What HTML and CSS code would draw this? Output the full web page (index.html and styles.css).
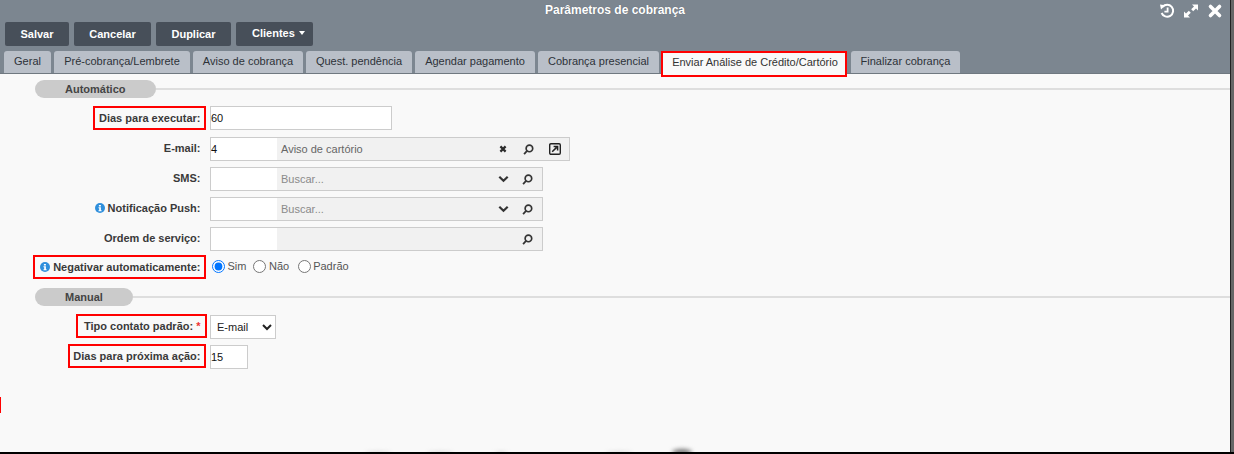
FILE: index.html
```html
<!DOCTYPE html>
<html lang="en">
<head>
    <meta charset="UTF-8">
    <title>Parâmetros de cobrança</title>
    <link rel="stylesheet" href="styles.css">
</head>
<body>
    <svg class="icon-defs" width="0" height="0">
        <symbol id="i-search" viewBox="0 0 12 12">
            <circle cx="7" cy="4.8" r="3.6" fill="none" stroke="currentColor" stroke-width="1.8"/>
            <path d="M4.4 7.6 1.2 11" fill="none" stroke="currentColor" stroke-width="2"/>
        </symbol>
        <symbol id="i-chevron" viewBox="0 0 12 8">
            <path d="M1.4 1.6 6 6 10.6 1.6" fill="none" stroke="currentColor" stroke-width="2.4"/>
        </symbol>
        <symbol id="i-info" viewBox="0 0 10 10">
            <circle cx="5" cy="5" r="5" fill="#2f8fdc"/>
            <path d="M3.9 2h2v1.5h-2zM3.5 4.2h2.4v3h.7v1H3.5v-1h.7v-2h-.7z" fill="#fff"/>
        </symbol>
    </svg>

    <div class="window">
        <div class="header">
            <div class="title-bar">
                <span class="title">Parâmetros de cobrança</span>
                <div class="window-icons">
                    <svg class="win-icon" viewBox="0 0 16 16">
                        <path d="M3.6 3.8A6 6 0 1 1 2.6 10" fill="none" stroke="#fff" stroke-width="2"/>
                        <path d="M1 1.6 6.4 2.2 2 6.6z" fill="#fff"/>
                        <path d="M8.6 4.4v4.2H5.4" fill="none" stroke="#fff" stroke-width="1.8"/>
                    </svg>
                    <svg class="win-icon" viewBox="0 0 16 16">
                        <path d="M9 1.4h6v6l-2-2-2.8 2.8-2-2L11 3.4zM7 14.6H1v-6l2 2 2.8-2.8 2 2L5 12.6z" fill="#fff"/>
                    </svg>
                    <svg class="win-icon" viewBox="0 0 16 16">
                        <path d="M3.5 3.5 12.5 12.5M12.5 3.5 3.5 12.5" stroke="#fff" stroke-width="3.6" stroke-linecap="round"/>
                    </svg>
                </div>
            </div>

            <div class="toolbar">
                <button class="btn btn-save">Salvar</button>
                <button class="btn btn-cancel">Cancelar</button>
                <button class="btn btn-copy">Duplicar</button>
                <button class="btn btn-menu">Clientes <span class="caret"></span></button>
            </div>

            <div class="tabs">
                <div class="tab tab-geral">Geral</div>
                <div class="tab tab-pre">Pré-cobrança/Lembrete</div>
                <div class="tab tab-aviso">Aviso de cobrança</div>
                <div class="tab tab-quest">Quest. pendência</div>
                <div class="tab tab-agendar">Agendar pagamento</div>
                <div class="tab tab-presencial">Cobrança presencial</div>
                <div class="tab tab-active">Enviar Análise de Crédito/Cartório</div>
                <div class="tab tab-final">Finalizar cobrança</div>
            </div>
        </div>

        <div class="content">
            <div class="section-head">
                <div class="pill pill-auto">Automático</div>
                <div class="section-line"></div>
            </div>

            <div class="row row-first">
                <div class="label-col"><label class="field-label marked mark-dias">Dias para executar:</label></div>
                <input class="text-input input-wide" value="60">
            </div>

            <div class="row row-email">
                <div class="label-col"><label class="field-label">E-mail:</label></div>
                <div class="lookup lookup-long">
                    <input class="lookup-code" value="4">
                    <span class="lookup-text">Aviso de cartório</span>
                    <svg class="lookup-x" viewBox="0 0 8 8">
                        <path d="M1.4 1.4 6.6 6.6M6.6 1.4 1.4 6.6" stroke="#2b2b2b" stroke-width="2.2"/>
                    </svg>
                    <svg class="lookup-search"><use href="#i-search"/></svg>
                    <svg class="lookup-open" viewBox="0 0 12 12">
                        <rect x="0.7" y="0.7" width="10.6" height="10.6" rx="1.2" fill="none" stroke="#222" stroke-width="1.4"/>
                        <path d="M3.2 8.8 7.6 4.4M4.6 3.4h4v4" fill="none" stroke="#222" stroke-width="1.5"/>
                    </svg>
                </div>
            </div>

            <div class="row">
                <div class="label-col"><label class="field-label">SMS:</label></div>
                <div class="lookup">
                    <input class="lookup-code">
                    <span class="lookup-text lookup-hint">Buscar...</span>
                    <svg class="lookup-chevron"><use href="#i-chevron"/></svg>
                    <svg class="lookup-search"><use href="#i-search"/></svg>
                </div>
            </div>

            <div class="row">
                <div class="label-col"><label class="field-label"><svg class="info"><use href="#i-info"/></svg> Notificação Push:</label></div>
                <div class="lookup">
                    <input class="lookup-code">
                    <span class="lookup-text lookup-hint">Buscar...</span>
                    <svg class="lookup-chevron"><use href="#i-chevron"/></svg>
                    <svg class="lookup-search"><use href="#i-search"/></svg>
                </div>
            </div>

            <div class="row">
                <div class="label-col"><label class="field-label">Ordem de serviço:</label></div>
                <div class="lookup">
                    <input class="lookup-code">
                    <span class="lookup-text"></span>
                    <svg class="lookup-search"><use href="#i-search"/></svg>
                </div>
            </div>

            <div class="row row-radio">
                <div class="label-col"><label class="field-label marked mark-neg"><svg class="info"><use href="#i-info"/></svg> Negativar automaticamente:</label></div>
                <div class="radios">
                    <label class="radio"><input type="radio" name="neg" checked>Sim</label>
                    <label class="radio"><input type="radio" name="neg">Não</label>
                    <label class="radio radio-last"><input type="radio" name="neg">Padrão</label>
                </div>
            </div>

            <div class="section-head section-manual">
                <div class="pill pill-manual">Manual</div>
                <div class="section-line"></div>
            </div>

            <div class="row row-select">
                <div class="label-col"><label class="field-label marked mark-tipo">Tipo contato padrão: <span class="req">*</span></label></div>
                <select class="select-input"><option>E-mail</option></select>
            </div>

            <div class="row">
                <div class="label-col"><label class="field-label marked mark-prox">Dias para próxima ação:</label></div>
                <input class="text-input input-short" value="15">
            </div>

            <div class="red-tick"></div>

            <!-- dock icons showing through at the bottom edge -->
            <span class="blur-spot spot-1"></span>
            <span class="blur-spot spot-2"></span>
            <span class="blur-spot spot-3"></span>
            <span class="blur-spot spot-4"></span>
            <span class="blur-spot spot-5"></span>
        </div>
    </div>
    <div class="bottom-strip"></div>
</body>
</html>
```

FILE: styles.css
```css
* {
    margin: 0;
    padding: 0;
    box-sizing: border-box;
}

html, body {
    height: 100%;
    overflow: hidden;
}

body {
    font-family: 'Liberation Sans', Arial, sans-serif;
    font-size: 11px;
    color: #333;
    background: #666;
}

.icon-defs {
    position: absolute;
}

.window {
    width: 1231px;
    height: 452px;
    background: #f9f9f9;
    border-right: 1px solid #222;
    display: flex;
    flex-direction: column;
    overflow: hidden;
}

.bottom-strip {
    height: 2px;
    background: #000;
}

/* header */
.header {
    background: #7c8690;
    height: 74px;
    border-bottom: 1px solid #6f7880;
}

.title-bar {
    height: 22px;
    position: relative;
    text-align: center;
}

.title {
    display: block;
    color: #fff;
    font-size: 12px;
    font-weight: bold;
    line-height: 21px;
    text-shadow: 0 0 1px rgba(0, 0, 0, 0.3);
}

.window-icons {
    position: absolute;
    top: 3px;
    left: 1159px;
    display: flex;
    gap: 8px;
}

.win-icon {
    width: 16px;
    height: 16px;
}

.toolbar {
    display: flex;
    padding-left: 5px;
    height: 24px;
    gap: 5px;
}

.btn {
    background: #474f59;
    color: #fff;
    border: none;
    border-radius: 2px;
    font-family: inherit;
    font-size: 11px;
    font-weight: bold;
    height: 24px;
}

.btn-save { width: 64px; }
.btn-cancel { width: 77px; }
.btn-copy { width: 75px; }
.btn-menu { width: 77px; padding: 0 0 3px 8px; }

.caret {
    display: inline-block;
    border-top: 4px solid #fff;
    border-left: 3.5px solid transparent;
    border-right: 3.5px solid transparent;
    vertical-align: 2px;
    margin-left: 1px;
}

.tabs {
    display: flex;
    height: 23px;
    margin-top: 5px;
    padding-left: 4px;
    gap: 3px;
}

.tab {
    background: #b9bfc8;
    color: #2d3238;
    border-radius: 3px 3px 0 0;
    font-size: 11px;
    line-height: 21px;
    height: 22px;
    text-align: center;
}

.tab-geral { width: 47px; }
.tab-pre { width: 136px; }
.tab-aviso { width: 110px; }
.tab-quest { width: 106px; }
.tab-agendar { width: 120px; }
.tab-presencial { width: 121px; }
.tab-final { width: 109px; margin-left: 1px; }

.tab-active {
    width: 186px;
    height: 26px;
    background: #f9f9f9;
    color: #333;
    border: 2px solid #f00;
    border-radius: 0;
    line-height: 18px;
    padding-left: 2px;
    position: relative;
    margin-left: -1px;
}

/* form */
.content {
    flex: 1;
    position: relative;
    padding-top: 6px;
}

.section-head {
    display: flex;
    align-items: center;
    height: 18px;
    padding-left: 35px;
}

.pill {
    background: #cbcbcb;
    border-radius: 9px;
    height: 18px;
    font-weight: bold;
    line-height: 18px;
    color: #444;
}

.pill-auto {
    width: 121px;
    padding-left: 30px;
}

.pill-manual {
    width: 98px;
    padding-left: 30px;
}

.section-line {
    flex: 1;
    height: 2px;
    background: #dedede;
}

.row {
    display: flex;
    align-items: center;
    height: 24px;
    margin-top: 6px;
}

.row-first {
    margin-top: 8px;
}

.row-email {
    margin-top: 7px;
}

.row-radio {
    margin-top: 3px;
}

.section-manual {
    margin-top: 10px;
}

.row-select {
    margin-top: 9px;
}

.label-col {
    width: 200.5px;
    margin-right: 9.5px;
    margin-top: -2px;
    text-align: right;
    flex: none;
}

.row-first .label-col {
    margin-top: 0;
}

.row-radio .label-col {
    margin-top: 2px;
}

.field-label {
    font-weight: bold;
    color: #3a3a3a;
}

.marked {
    display: inline-block;
    border: 2px solid #f00;
    padding: 3px 3px 3px 4px;
    margin-right: -5px;
    line-height: 14px;
}

.mark-prox { padding-left: 3px; }
.mark-neg { padding-left: 5px; }
.mark-tipo { padding-left: 6px; padding-right: 4px; margin-right: -6px; }

.info {
    width: 10px;
    height: 10px;
    vertical-align: -1px;
}

.req {
    color: #e33;
}

.text-input {
    height: 24px;
    border: 1px solid #ccc;
    background: #fff;
    font-family: inherit;
    font-size: 11px;
    color: #111;
    outline: none;
}

.input-wide { width: 182px; }
.input-short { width: 38px; }

.select-input {
    width: 66px;
    height: 24px;
    border: 1px solid #ccc;
    background: #fff;
    font-family: inherit;
    font-size: 11px;
    color: #222;
    padding-left: 2px;
}

.lookup {
    display: flex;
    align-items: center;
    width: 333px;
    height: 24px;
    border: 1px solid #ccc;
    background: #f1f1f1;
}

.lookup-long {
    width: 360px;
}

.lookup-code {
    width: 66px;
    height: 22px;
    border: none;
    background: #fff;
    font-family: inherit;
    font-size: 11px;
    color: #111;
    outline: none;
}

.lookup-text {
    flex: 1;
    padding-left: 4px;
    color: #666;
}

.lookup-hint {
    color: #8a8a8a;
}

.lookup-x {
    width: 8px;
    height: 8px;
    margin-right: 16px;
}

.lookup-chevron {
    width: 11px;
    height: 8px;
    color: #333;
    margin-right: 13px;
}

.lookup-search {
    width: 11px;
    height: 11px;
    color: #333;
    margin-right: 9px;
}

.lookup-long .lookup-search {
    margin-right: 15px;
}

.lookup-open {
    width: 12px;
    height: 12px;
    margin-right: 8px;
}

.radios {
    display: flex;
    gap: 7px;
    color: #555;
    margin-left: 2px;
}

.radio {
    display: flex;
    align-items: center;
    gap: 1.5px;
}

.radio-last {
    margin-left: 1.5px;
}

.radio input {
    width: 13px;
    height: 13px;
    margin-right: 1px;
}

.red-tick {
    position: absolute;
    left: 0;
    top: 323px;
    width: 1px;
    height: 16px;
    background: #f00;
}

.blur-spot {
    position: absolute;
    bottom: -3px;
    width: 26px;
    height: 3px;
    border-radius: 50%;
    background: #ccc;
    filter: blur(2px);
}

.spot-1 { left: 365px; }
.spot-2 { left: 427px; }
.spot-3 { left: 495px; width: 12px; }
.spot-4 { left: 606px; }
.spot-5 { left: 672px; width: 20px; height: 6px; background: #777; }
```
